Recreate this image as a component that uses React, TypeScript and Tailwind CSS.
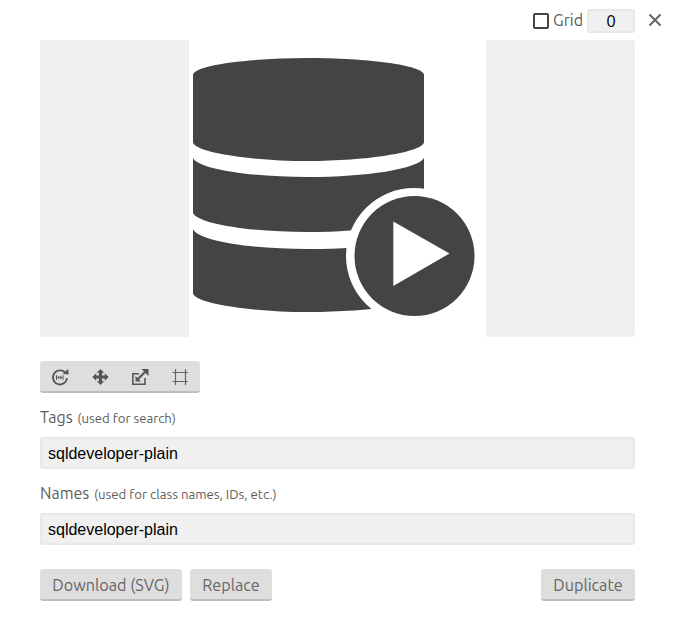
export default function App() {
  const ui = "font-['Ubuntu','Noto_Sans',sans-serif]";
  const btn = "h-8 rounded-[3px] bg-[#dedede] border-b-2 border-[#bdbdbd] text-[#666] text-[16.2px] leading-[32px] " + ui;
  const input = "block h-8 w-full rounded-[3px] bg-[#f0f0f0] border-2 border-[#e8e8e8] px-[6px] pt-[2px] text-[16px] text-black font-['Liberation_Sans',Arial,sans-serif] outline-none";
  return (
    <div className={"relative h-[641px] w-[674px] bg-white pl-10 pr-[39px] pt-[10px] " + ui}>
      <div className="flex h-[22px] items-center justify-end">
        <span className="h-4 w-4 rounded-[2px] border-2 border-[#444]" />
        <span className="ml-[4px] pb-[2px] text-[16px] text-[#5c5c5c]">Grid</span>
        <span className="ml-[4px] h-6 w-12 rounded-[3px] bg-[#f0f0f0] border-2 border-[#e8e8e8] text-center text-[17px] leading-[20px] text-black">0</span>
      </div>
      <button className="absolute right-[12px] top-[13px] text-[#666]">
        <svg width="14" height="14" viewBox="0 0 14 14"><path d="M1.5 1.5L12.5 12.5M12.5 1.5L1.5 12.5" stroke="#666" strokeWidth="2" /></svg>
      </button>

      <div className="mt-2 flex h-[297px] justify-center rounded-[3px] bg-[#f0f0f0]">
        <svg width="297" height="297" viewBox="189 40 297 297" className="bg-white">
          <g fill="#444">
            <path d="M193 75C193 65 250 58 308 58C366 58 424 65 424 75V142C424 152 366 161 308 161C250 161 193 152 193 142Z" />
            <path d="M193 158C198 169 250 177 308 177C366 177 418 169 424 158V213C418 224 366 232 308 232C250 232 198 224 193 213Z" />
            <path d="M193 229C198 241 250 249 308 249C340 249 370 247 400 243L400 305C370 310 340 312 308 312C250 312 193 303 193 293Z" />
          </g>
          <circle cx="414" cy="256" r="68" fill="#fff" />
          <circle cx="414.5" cy="256" r="60" fill="#444" />
          <path d="M393.3 221.5L449.5 253.5L393.3 286Z" fill="#fff" />
        </svg>
      </div>

      <div className="mt-6 flex h-8 w-40 items-center rounded-[3px] border-b-2 border-[#bdbdbd] bg-[#dedede]">
        <span className="flex w-10 justify-center pt-[2px]">
          <svg width="20" height="20" viewBox="0 0 20 20" fill="none" stroke="#555">
            <path d="M15.6 6.2A7 7 0 1 0 17 11" strokeWidth="1.8" />
            <path d="M12.6 6.8L18.6 7.4L18.2 2Z" fill="#555" stroke="none" />
            <path d="M6.5 8.2V12.8M13 8.2V12.8" strokeWidth="1" />
            <path d="M7 10.5L9.4 8.8V12.2ZM12.6 10.5L10.2 8.8V12.2Z" fill="#555" stroke="none" />
          </svg>
        </span>
        <span className="flex w-10 justify-center pt-[2px]">
          <svg width="20" height="20" viewBox="0 0 20 20" fill="#555">
            <path d="M10.5 2L14.2 5.8H12.1V8.4H14.8V6.3L18.7 10L14.8 13.7V11.6H12.1V14.2H14.2L10.5 18L6.8 14.2H8.9V11.6H6.2V13.7L2.3 10L6.2 6.3V8.4H8.9V5.8H6.8Z" />
          </svg>
        </span>
        <span className="flex w-10 justify-center pt-[2px]">
          <svg width="20" height="20" viewBox="0 0 20 20" fill="none" stroke="#555">
            <path d="M15 11V17.2H2.8V6.8H9" strokeWidth="1.6" />
            <path d="M7 13L15 5" strokeWidth="2.2" />
            <path d="M11.5 2H18.5V9Z" fill="#555" stroke="none" />
            <path d="M5.5 9V14.5H11Z" fill="#555" stroke="none" />
          </svg>
        </span>
        <span className="flex w-10 justify-center pt-[2px]">
          <svg width="20" height="20" viewBox="0 0 20 20" fill="none" stroke="#666" strokeWidth="1.2">
            <path d="M2.5 5.5H18M2.5 14.5H18M5.5 2V18M15.5 2V18" />
          </svg>
        </span>
      </div>

      <div className="mt-3 h-6 text-[16px] leading-6 text-[#5c5c5c]">Tags <span className="ml-px text-[13.2px]">(used for search)</span></div>
      <input readOnly value="sqldeveloper-plain" className={"mt-2 " + input} />
      <div className="mt-3 h-6 text-[16px] leading-6 text-[#5c5c5c]">Names <span className="ml-px text-[13.2px]">(used for class names, IDs, etc.)</span></div>
      <input readOnly value="sqldeveloper-plain" className={"mt-2 " + input} />

      <div className="mt-6 flex gap-2">
        <button className={"w-[142px] " + btn}>Download (SVG)</button>
        <button className={"w-[82px] " + btn}>Replace</button>
        <button className={"ml-auto w-[94px] " + btn}>Duplicate</button>
      </div>
    </div>
  );
}
